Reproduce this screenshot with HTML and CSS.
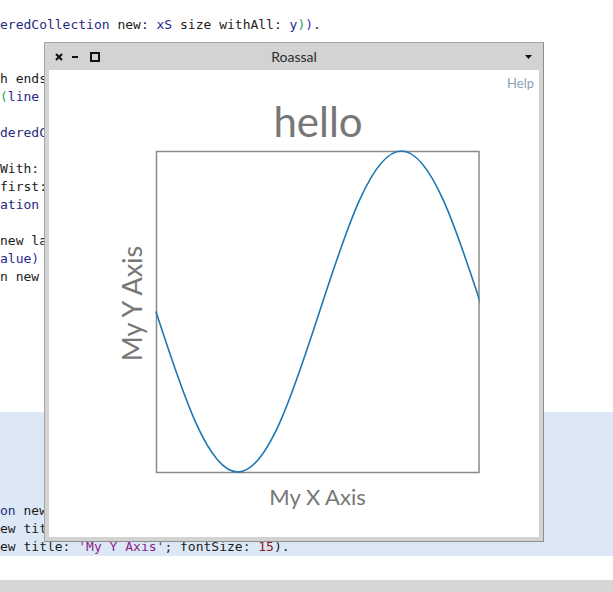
FILE: index.html
```html
<!DOCTYPE html>
<html>
<head>
<meta charset="utf-8">
<link rel="stylesheet" href="styles.css">
</head>
<body>
<div class="editor">
  <div class="code">
    <div class="line"><span class="cls">eredCollection</span> new: <span class="var">xS</span> size withAll: <span class="var">y</span><span class="pg">)</span><span class="pb">)</span>.</div>
    <div class="line"></div>
    <div class="line"></div>
    <div class="line">h ends</div>
    <div class="line"><span class="pg">(</span><span class="var">line</span></div>
    <div class="line"></div>
    <div class="line"><span class="cls">deredC</span></div>
    <div class="line"></div>
    <div class="line">With:</div>
    <div class="line">first:</div>
    <div class="line"><span class="cls">ation</span></div>
    <div class="line"></div>
    <div class="line">new la</div>
    <div class="line"><span class="var">alue</span><span class="pb">)</span></div>
    <div class="line">n new</div>
    <div class="line"></div>
    <div class="line"></div>
    <div class="line"></div>
    <div class="line"></div>
    <div class="line"></div>
    <div class="line"></div>
    <div class="line"></div>
  </div>
  <div class="code selection">
    <div class="line"></div>
    <div class="line"></div>
    <div class="line"></div>
    <div class="line"></div>
    <div class="line"></div>
    <div class="line"><span class="cls">on</span> new</div>
    <div class="line">ew tit</div>
    <div class="line">ew title: <span class="str">'My Y Axis'</span>; fontSize: <span class="num">15</span>).</div>
  </div>
</div>
<div class="scrollbar"></div>

<div class="window">
  <div class="titlebar">
    <div class="controls">
      <svg class="ic-close" width="8" height="8" viewBox="0 0 8 8"><path d="M1 1 L7 7 M7 1 L1 7" stroke="#111" stroke-width="2" fill="none"/></svg>
      <svg class="ic-min" width="6" height="2" viewBox="0 0 6 2"><rect x="0" y="0" width="6" height="2" fill="#111"/></svg>
      <svg class="ic-max" width="10" height="10" viewBox="0 0 10 10"><rect x="1" y="1" width="8" height="8" stroke="#111" stroke-width="2" fill="none"/></svg>
    </div>
    <div class="title">Roassal</div>
    <div class="menu">
      <svg width="7" height="4" viewBox="0 0 7 4"><polygon points="0,0 7,0 3.5,4" fill="#111"/></svg>
    </div>
  </div>
  <div class="canvas">
    <div class="help">Help</div>
    <svg class="chart" width="490" height="467" viewBox="49 70 490 467">
      <defs>
        <clipPath id="plotclip"><rect x="150" y="140" width="329.5" height="340"/></clipPath>
      </defs>
      <text class="chart-title" x="318" y="137" text-anchor="middle">hello</text>
      <rect x="156.5" y="151.5" width="322.5" height="321" fill="none" stroke="#8a8a8a" stroke-width="1.5"/>
      <path clip-path="url(#plotclip)" d="M155.92,311.5 C182.61,393.72 208.14,472 237.83,472 C267.36,472 292.89,393.72 319.58,311.5 C346.27,229.28 371.80,151 401.42,151 C431.03,151 456.56,229.28 483.25,311.5" fill="none" stroke="#1f77b4" stroke-width="1.6"/>
      <text class="x-label" x="317.5" y="505" text-anchor="middle">My X Axis</text>
      <text class="y-label" transform="translate(141.5,303.5) rotate(-90)" text-anchor="middle">My Y Axis</text>
    </svg>
  </div>
</div>
</body>
</html>
```
FILE: styles.css
```css
html, body {
  margin: 0;
  padding: 0;
}
body {
  width: 613px;
  height: 592px;
  overflow: hidden;
  position: relative;
  display: flex;
  flex-direction: column;
  background: #ffffff;
}
.editor {
  padding-top: 16px;
}
.code {
  font-family: "DejaVu Sans Mono", "Liberation Mono", monospace;
  font-size: 13px;
  color: #1b1b1b;
}
.line {
  height: 18px;
  line-height: 18px;
  white-space: pre;
}
.selection {
  background: #dce8f6;
}
.cls { color: #1f2a7e; }
.var { color: #26268c; }
.str { color: #8a1f8a; }
.num { color: #8b1a1a; }
.pg { color: #2f9f5f; }
.pb { color: #2a36b5; }

.scrollbar {
  margin-top: auto;
  height: 12px;
  background: #d6d6d6;
}

.window {
  position: absolute;
  left: 44px;
  top: 42px;
  width: 498px;
  height: 498px;
  border: 1px solid #a6a6a6;
  border-right-color: #8e8e8e;
  border-bottom-color: #8e8e8e;
  background: #d3d3d3;
  display: flex;
  flex-direction: column;
}
.titlebar {
  height: 27px;
  display: grid;
  grid-template-columns: 1fr auto 1fr;
  align-items: center;
  font-family: Lato, "Noto Sans", sans-serif;
}
.controls {
  display: flex;
  align-items: center;
  padding-left: 10px;
}
.controls svg { display: block; }
.ic-min { margin-left: 9px; }
.ic-max { margin-left: 12px; }
.title {
  font-size: 14px;
  color: #2b2b2b;
}
.menu {
  justify-self: end;
  padding-right: 11px;
  display: flex;
  align-items: center;
}
.menu svg { display: block; }
.canvas {
  position: relative;
  margin: 0 4px 4px 4px;
  width: 490px;
  height: 467px;
  background: #ffffff;
}
.chart {
  display: block;
}
.help {
  position: absolute;
  top: 5px;
  right: 5px;
  font-family: Lato, "Noto Sans", sans-serif;
  font-size: 13px;
  line-height: 16px;
  color: #8b9fb5;
}
.chart-title, .x-label, .y-label {
  font-family: Lato, "Noto Sans", sans-serif;
  fill: #777777;
}
.chart-title { font-size: 42px; }
.x-label { font-size: 22px; }
.y-label { font-size: 27px; }
```
